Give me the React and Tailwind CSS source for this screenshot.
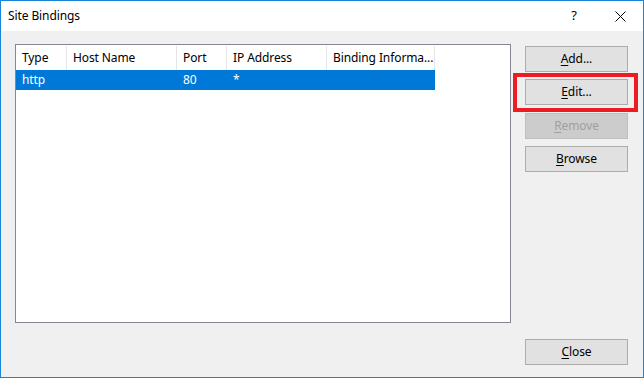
import React from "react";

const font = { fontFamily: '"Segoe UI", "Noto Sans", "Liberation Sans", sans-serif' };

function Btn({ k, rest, disabled, extra = "" }) {
  return (
    <div
      className={
        "w-[103px] h-[26px] flex items-center justify-center text-[12px] border " +
        (disabled
          ? "bg-[#cccccc] border-[#bfbfbf] text-[#a0a0a0] "
          : "bg-[#e1e1e1] border-[#adadad] text-black ") +
        extra
      }
    >
      <span>
        <span className="underline underline-offset-2">{k}</span>
        {rest}
      </span>
    </div>
  );
}

export default function App() {
  const cols = [
    { w: "w-[51px]", h: "Type", v: "http" },
    { w: "w-[110px]", h: "Host Name", v: "" },
    { w: "w-[50px]", h: "Port", v: "80" },
    { w: "w-[100px]", h: "IP Address", v: "*" },
    { w: "w-[108px]", h: "Binding Informa...", v: "" },
  ];
  return (
    <div
      style={font}
      className="relative w-[644px] h-[378px] border border-[#1883d7] bg-[#f0f0f0] flex flex-col text-[12px] text-black overflow-hidden tracking-[-0.1px]"
    >
      <div className="h-[30px] bg-white flex items-center pl-[7px] shrink-0">
        <span className="flex-1 pb-[1px]">Site Bindings</span>
        <span className="w-[46px] text-center text-[13px]">?</span>
        <span className="w-[46px] flex items-center justify-center">
          <svg width="11" height="11" viewBox="0 0 11 11">
            <path d="M0.5 0.5 L10.5 10.5 M10.5 0.5 L0.5 10.5" stroke="#000" strokeWidth="1" />
          </svg>
        </span>
      </div>
      <div className="flex-1 flex pt-[13px] pl-[14px]">
        <div className="w-[496px] h-[279px] border border-[#828790] bg-white flex flex-col">
          <div className="flex h-[25px] pt-[1px]">
            {cols.map((c, i) => (
              <div
                key={i}
                className={c.w + " border-r border-[#e5e5e5] flex items-center pl-[6px] whitespace-nowrap overflow-hidden"}
              >
                {c.h}
              </div>
            ))}
          </div>
          <div className="flex h-[20px] bg-[#0078d7] text-white w-[419px]">
            {cols.map((c, i) => (
              <div key={i} className={c.w + " flex items-center pl-[6px]"}>
                {c.v}
              </div>
            ))}
          </div>
        </div>
        <div className="ml-[14px] pt-[2px] flex flex-col">
          <Btn k="A" rest="dd..." />
          <div className="mt-[7px]">
            <Btn k="E" rest="dit..." />
          </div>
          <div className="mt-[8px]">
            <Btn k="R" rest="emove" disabled />
          </div>
          <div className="mt-[7px]">
            <Btn k="B" rest="rowse" />
          </div>
          <div className="mt-[167px]">
            <Btn k="C" rest="lose" />
          </div>
        </div>
      </div>
      <div className="absolute left-[512px] top-[72px] w-[125px] h-[39px] border-[4px] border-[#ed1c24]" />
    </div>
  );
}
